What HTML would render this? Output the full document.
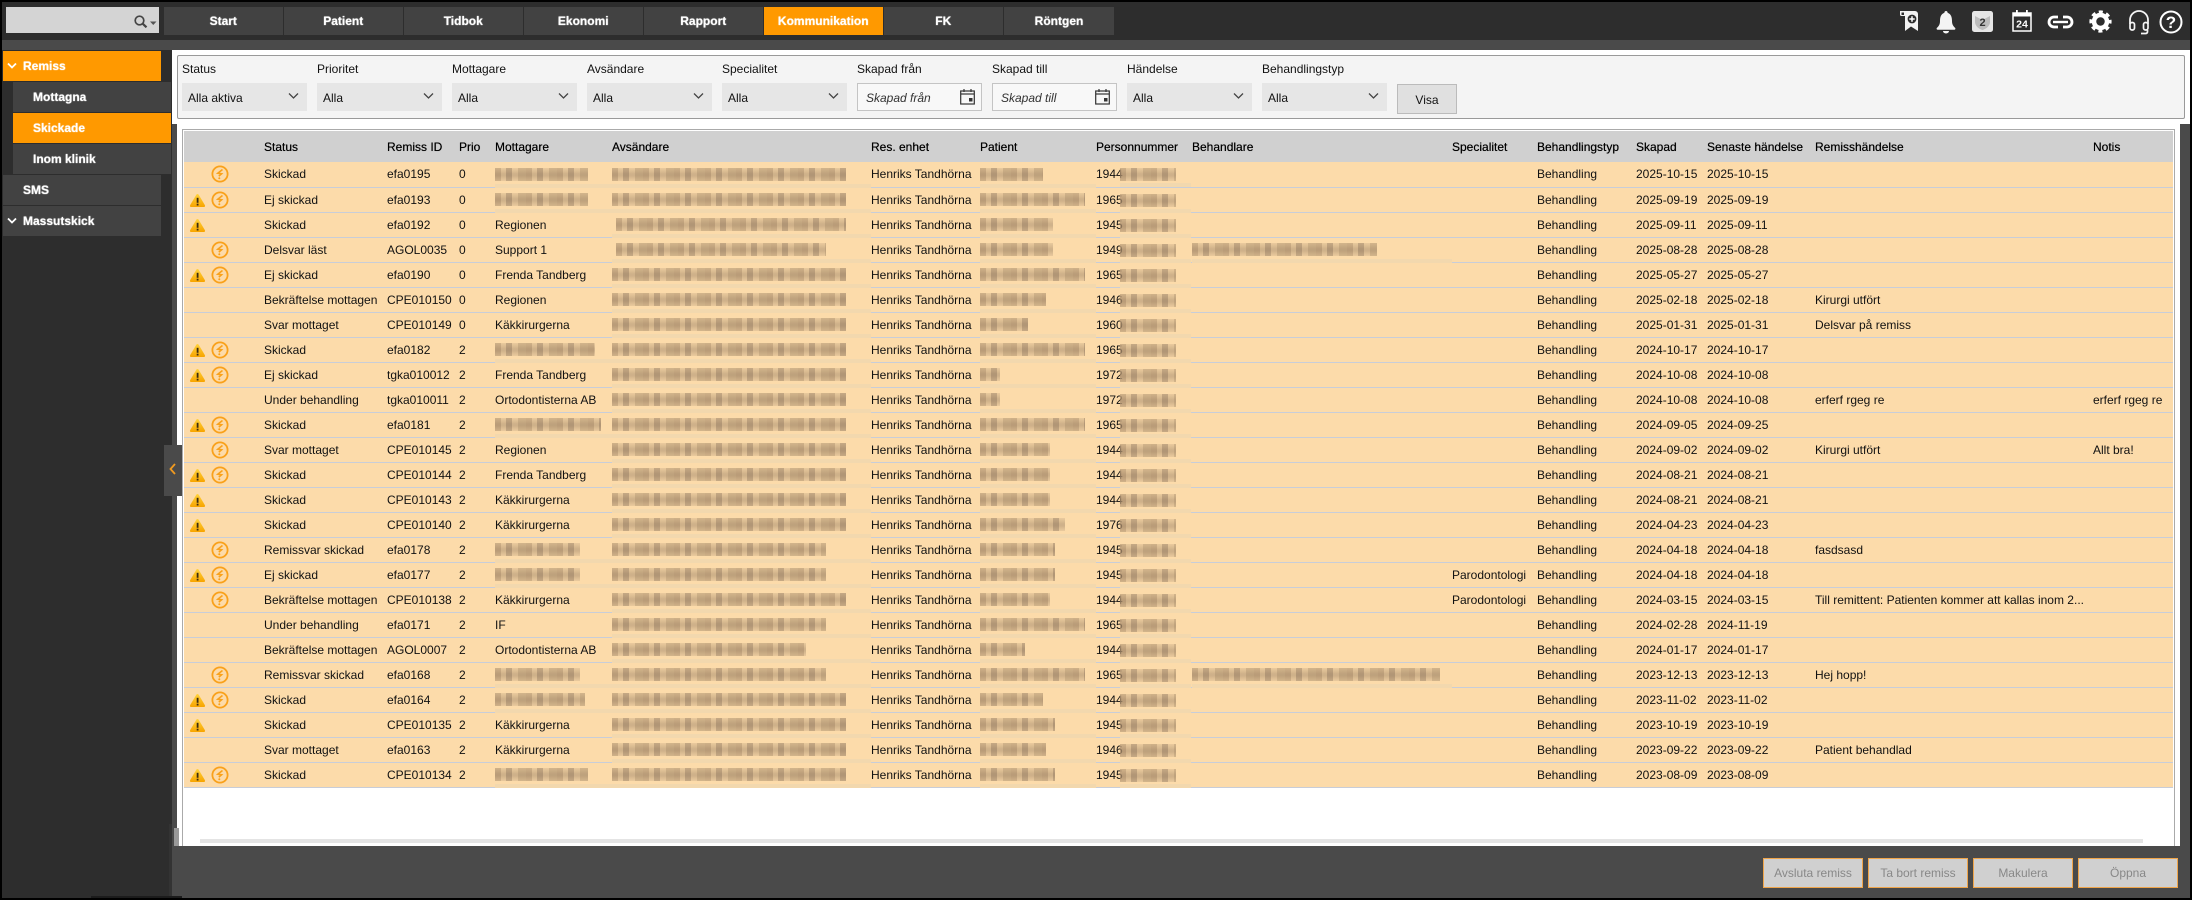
<!DOCTYPE html>
<html lang="sv"><head><meta charset="utf-8"><title>Remiss</title>
<style>
*{box-sizing:border-box}
html,body{margin:0;padding:0;width:2192px;height:900px;overflow:hidden;background:#000;font-family:"Liberation Sans",Arial,sans-serif;font-size:12px;color:#111}
.a{position:absolute}
.nav{position:absolute;top:7px;height:28px;width:118.5px;background:#424242;color:#fff;font-weight:bold;font-size:12px;text-align:center;line-height:28px;text-shadow:0 0 1px #fff}
.nav.on{background:#ff9900}
.sb{position:absolute;height:30px;background:#424242;color:#fff;font-weight:bold;font-size:12px;line-height:30px;text-shadow:0 0 1px #fff}
.sb.on{background:#ff9900}
.lbl{position:absolute;top:62px;line-height:14px;color:#111}
.dd{position:absolute;top:83px;height:28px;width:125px;background:#e6e6e6;line-height:30px;padding-left:6px}
.dd svg{position:absolute;right:8px;top:9px}
.dt{position:absolute;top:83px;height:28px;width:125px;background:#f8f8f8;border:1px solid #c4c4c4;line-height:28px;padding-left:8px;font-style:italic;color:#333}
.dt svg{position:absolute;right:6px;top:5px}
.btn{position:absolute;top:858px;width:100px;height:30px;background:#d0d0d0;border:1px solid #f0a54a;color:#888;text-align:center;line-height:28px}
table{position:absolute;left:184px;top:131px;width:1989px;border-collapse:collapse;table-layout:fixed}
th{height:31px;background:#d0d0d0;font-weight:normal;text-align:left;padding:0;color:#000;white-space:nowrap;text-shadow:0 0 .4px #000;overflow:visible}
td{height:25px;background:#fcdbaa;border-bottom:1px solid #c8cdd8;padding:0;white-space:nowrap;overflow:visible;position:relative;line-height:24px}
.w{position:absolute;left:5px;top:5px;width:17px;height:15px}
.e{position:absolute;left:27px;top:3px;width:18px;height:18px}
.b{display:inline-block;height:13px;vertical-align:middle;margin-top:-2px;background-color:rgba(205,175,135,.55);background-image:repeating-linear-gradient(90deg,rgba(150,122,92,.35) 0 6px,rgba(214,185,145,.25) 6px 11px,rgba(135,112,90,.4) 11px 17px,rgba(214,185,145,.2) 17px 23px,rgba(168,142,108,.4) 23px 31px),linear-gradient(180deg,rgba(252,219,170,.5) 0,rgba(140,115,90,.25) 45%,rgba(140,115,90,.25) 60%,rgba(252,219,170,.5) 100%)}
.b::after{content:"";position:absolute;left:0;right:0;bottom:-1px;height:4px;background:#f2d8ae}
.p{margin-left:-1px;position:absolute;left:25px;top:6px;margin-top:0}
.p::after{left:0;right:-15px;bottom:auto;top:15px}
</style></head><body>
<svg width="0" height="0" style="position:absolute"><defs>
<linearGradient id="g" x1="0" y1="0" x2="0" y2="1"><stop offset="0" stop-color="#ffd23c"/><stop offset="1" stop-color="#f7a400"/></linearGradient>
<symbol id="sw" viewBox="0 0 17 15"><path d="M8.500 1 C9.200 1 9.600 1.500 10 2.200 L15.800 12 C16.400 13.100 16 14 14.800 14 L2.200 14 C1 14 .6 13.100 1.200 12 L7 2.200 C7.400 1.500 7.800 1 8.500 1Z" fill="url(#g)"/><rect x="7.700" y="4.800" width="1.800" height="5" fill="#3a2a10"/><rect x="7.700" y="10.700" width="1.800" height="1.800" fill="#3a2a10"/></symbol>
<symbol id="se" viewBox="0 0 18 18"><circle cx="9" cy="9" r="7.600" fill="none" stroke="#f9a11b" stroke-width="1.800"/><path d="M11.500 4.500 L6.800 8.200 L10.600 8.800 L7.800 11.200" fill="none" stroke="#f9a11b" stroke-width="1.600"/><circle cx="8.300" cy="13.200" r="1" fill="#f9a11b"/></symbol>
</defs></svg>

<!-- top -->
<div class="a" style="left:2px;top:2px;width:2188px;height:38px;background:#2d2d2d"></div>
<div class="a" style="left:2px;top:40px;width:2188px;height:10px;background:#4a4a4a"></div>
<div class="a" style="left:6px;top:7px;width:153px;height:26px;background:#d4d4d4"></div>
<svg class="a" style="left:133px;top:14px" width="26" height="16"><circle cx="6.500" cy="6.500" r="4.300" fill="none" stroke="#444" stroke-width="1.700"/><path d="M9.700 9.700 L13.500 13.300" stroke="#444" stroke-width="2.200"/><path d="M17 7.500h6.500l-3.250 3.500z" fill="#555"/></svg>
<div class="nav" style="left:164px">Start</div>
<div class="nav" style="left:284px">Patient</div>
<div class="nav" style="left:404px">Tidbok</div>
<div class="nav" style="left:524px">Ekonomi</div>
<div class="nav" style="left:644px">Rapport</div>
<div class="nav on" style="left:764px">Kommunikation</div>
<div class="nav" style="left:884px">FK</div>
<div class="nav" style="left:1004px;width:110px">Röntgen</div>

<!-- top right icons -->
<svg class="a" style="left:1899px;top:11px" width="20" height="21"><path d="M1 0H16a3 3 0 0 1 3 3V20L12 15.500 6 20V5H2.500A1.500 1.500 0 0 1 1 3.500Z" fill="#f2f2f2"/><path d="M2.500 1.500H5V4H2.500Z" fill="#2d2d2d"/><circle cx="13" cy="8" r="5" fill="#2d2d2d" stroke="#f2f2f2" stroke-width="1.200"/><path d="M13 5.300V10.700M10.300 8H15.700" stroke="#fff" stroke-width="1.500"/></svg>
<svg class="a" style="left:1936px;top:11px" width="20" height="23"><path d="M10 0c1 0 1.600.7 1.600 1.700C15 3 16 6 16 10c0 3 1 5 3 6.800.8.800.4 2-.8 2H1.800C.6 18.800.2 17.600 1 16.800 3 15 4 13 4 10c0-4 1-7 4.400-8.300C8.400.7 9 0 10 0z" fill="#f4f4f4"/><path d="M7 20h6a3 2.500 0 0 1-6 0z" fill="#f4f4f4"/></svg>
<svg class="a" style="left:1972px;top:11px" width="21" height="21"><rect width="21" height="21" rx="2.500" fill="#e6e6e6"/><path d="M3 5 L10.500 9 L18 5 V11 C18 15 14 18 10.500 19 C7 18 3 15 3 11Z" fill="#bdbdbd"/><text x="10.500" y="15" font-family="Liberation Sans" font-size="11" font-weight="bold" fill="#333" text-anchor="middle">2</text></svg>
<svg class="a" style="left:2012px;top:9px" width="20" height="23"><rect x="1" y="4" width="18" height="18" fill="#2d2d2d" stroke="#fff" stroke-width="1.500"/><rect x="1" y="4" width="18" height="3.500" fill="#fff"/><rect x="4" y="1" width="1.800" height="4" fill="#fff"/><rect x="14" y="1" width="1.800" height="4" fill="#fff"/><text x="10" y="18.500" font-family="Liberation Sans" font-size="10.500" font-weight="bold" fill="#fff" text-anchor="middle">24</text></svg>
<svg class="a" style="left:2047px;top:14px" width="27" height="16"><path d="M11 3H7a5 5 0 0 0 0 10h4M16 3h4a5 5 0 0 1 0 10h-4" fill="none" stroke="#fff" stroke-width="2.800"/><path d="M6 8H21" stroke="#fff" stroke-width="2.400"/></svg>
<svg class="a" style="left:2089px;top:10px" width="23" height="23"><circle cx="11.500" cy="11.500" r="6.500" fill="none" stroke="#fff" stroke-width="4.500"/><circle cx="11.500" cy="11.500" r="9.500" fill="none" stroke="#fff" stroke-width="3.200" stroke-dasharray="4 3.460" stroke-dashoffset="2"/></svg>
<svg class="a" style="left:2128px;top:10px" width="22" height="25"><path d="M2 14V10a9 9 0 0 1 18 0v4" fill="none" stroke="#f4f4f4" stroke-width="1.800"/><rect x="2" y="12.500" width="4.500" height="7.500" rx="2" fill="none" stroke="#f4f4f4" stroke-width="1.700"/><rect x="15.500" y="12.500" width="4.500" height="7.500" rx="2" fill="none" stroke="#f4f4f4" stroke-width="1.700"/><path d="M19.500 20v2a2 2 0 0 1-2 1.500H13" fill="none" stroke="#f4f4f4" stroke-width="1.700"/></svg>
<svg class="a" style="left:2159px;top:10px" width="24" height="24"><circle cx="12" cy="12" r="10.500" fill="none" stroke="#fff" stroke-width="2"/><text x="12" y="18" font-family="Liberation Sans" font-size="17" font-weight="bold" fill="#fff" text-anchor="middle">?</text></svg>

<!-- sidebar -->
<div class="a" style="left:2px;top:50px;width:170px;height:848px;background:#2d2d2d"></div>
<div class="sb on" style="left:3px;top:51px;width:158px;padding-left:20px">Remiss</div>
<svg class="a" style="left:7px;top:62px" width="10" height="8"><path d="M1 1.500 L5 5.500 L9 1.500" fill="none" stroke="#fff" stroke-width="1.800"/></svg>
<div class="sb" style="left:13px;top:82px;width:158px;padding-left:20px">Mottagna</div>
<div class="sb on" style="left:13px;top:113px;width:158px;padding-left:20px">Skickade</div>
<div class="sb" style="left:13px;top:144px;width:158px;padding-left:20px">Inom klinik</div>
<div class="sb" style="left:3px;top:175px;width:158px;padding-left:20px">SMS</div>
<div class="sb" style="left:3px;top:206px;width:158px;padding-left:20px">Massutskick</div>
<svg class="a" style="left:7px;top:217px" width="10" height="8"><path d="M1 1.500 L5 5.500 L9 1.500" fill="none" stroke="#fff" stroke-width="1.800"/></svg>

<!-- main -->
<div class="a" style="left:172px;top:50px;width:2018px;height:74px;background:#fff"></div>
<div class="a" style="left:172px;top:124px;width:5px;height:774px;background:#4a4a4a"></div>
<div class="a" style="left:169px;top:824px;width:3px;height:74px;background:#333"></div>
<div class="a" style="left:177px;top:124px;width:2003px;height:722px;background:#fff"></div>
<div class="a" style="left:177px;top:846px;width:2013px;height:52px;background:#4a4a4a"></div>
<div class="a" style="left:2180px;top:124px;width:10px;height:722px;background:#4a4a4a"></div>
<div class="a" style="left:174px;top:828px;width:5px;height:18px;background:#999"></div>
<div class="a" style="left:91px;top:896px;width:91px;height:2px;background:#1c1c1c"></div>

<!-- filter -->
<div class="a" style="left:177px;top:55px;width:2008px;height:64px;background:#f4f4f4;border:1px solid #999;border-radius:2px"></div>
<div class="lbl" style="left:182px">Status</div>
<div class="lbl" style="left:317px">Prioritet</div>
<div class="lbl" style="left:452px">Mottagare</div>
<div class="lbl" style="left:587px">Avsändare</div>
<div class="lbl" style="left:722px">Specialitet</div>
<div class="lbl" style="left:857px">Skapad från</div>
<div class="lbl" style="left:992px">Skapad till</div>
<div class="lbl" style="left:1127px">Händelse</div>
<div class="lbl" style="left:1262px">Behandlingstyp</div>
<div class="dd" style="left:182px">Alla aktiva<svg width="11" height="8"><path d="M1 1.500 L5.500 6 L10 1.500" fill="none" stroke="#444" stroke-width="1.300"/></svg></div>
<div class="dd" style="left:317px">Alla<svg width="11" height="8"><path d="M1 1.500 L5.500 6 L10 1.500" fill="none" stroke="#444" stroke-width="1.300"/></svg></div>
<div class="dd" style="left:452px">Alla<svg width="11" height="8"><path d="M1 1.500 L5.500 6 L10 1.500" fill="none" stroke="#444" stroke-width="1.300"/></svg></div>
<div class="dd" style="left:587px">Alla<svg width="11" height="8"><path d="M1 1.500 L5.500 6 L10 1.500" fill="none" stroke="#444" stroke-width="1.300"/></svg></div>
<div class="dd" style="left:722px">Alla<svg width="11" height="8"><path d="M1 1.500 L5.500 6 L10 1.500" fill="none" stroke="#444" stroke-width="1.300"/></svg></div>
<div class="dt" style="left:857px">Skapad från<svg width="15" height="16"><rect x=".7" y="2" width="13.600" height="13" fill="none" stroke="#333" stroke-width="1.200"/><path d="M1 5H14" stroke="#333" stroke-width="1.200"/><path d="M4 0V3M11 0V3" stroke="#333" stroke-width="1.200"/><rect x="9" y="9" width="3.500" height="3.500" fill="#333"/></svg></div>
<div class="dt" style="left:992px">Skapad till<svg width="15" height="16"><rect x=".7" y="2" width="13.600" height="13" fill="none" stroke="#333" stroke-width="1.200"/><path d="M1 5H14" stroke="#333" stroke-width="1.200"/><path d="M4 0V3M11 0V3" stroke="#333" stroke-width="1.200"/><rect x="9" y="9" width="3.500" height="3.500" fill="#333"/></svg></div>
<div class="dd" style="left:1127px">Alla<svg width="11" height="8"><path d="M1 1.500 L5.500 6 L10 1.500" fill="none" stroke="#444" stroke-width="1.300"/></svg></div>
<div class="dd" style="left:1262px">Alla<svg width="11" height="8"><path d="M1 1.500 L5.500 6 L10 1.500" fill="none" stroke="#444" stroke-width="1.300"/></svg></div>
<div class="a" style="left:1397px;top:84px;width:60px;height:30px;background:#e0e0e0;border:1px solid #bbb;text-align:center;line-height:30px">Visa</div>

<!-- table frame -->
<div class="a" style="left:182px;top:129px;width:1993px;height:717px;border:1px solid #aaa;border-bottom:0"></div>
<div class="a" style="left:200px;top:839px;width:1943px;height:4px;background:#e4e4e4"></div>

<table>
<colgroup><col style="width:80px"><col style="width:123px"><col style="width:72px"><col style="width:36px"><col style="width:117px"><col style="width:259px"><col style="width:109px"><col style="width:116px"><col style="width:96px"><col style="width:260px"><col style="width:85px"><col style="width:99px"><col style="width:71px"><col style="width:108px"><col style="width:278px"><col style="width:80px"></colgroup>
<tr><th></th><th>Status</th><th>Remiss ID</th><th>Prio</th><th>Mottagare</th><th>Avsändare</th><th>Res. enhet</th><th>Patient</th><th>Personnummer</th><th>Behandlare</th><th>Specialitet</th><th>Behandlingstyp</th><th>Skapad</th><th>Senaste händelse</th><th>Remisshändelse</th><th>Notis</th></tr>
<tr><td><svg class="e"><use href="#se"/></svg></td><td>Skickad</td><td>efa0195</td><td>0</td><td><span class="b" style="width:93px"></span></td><td><span class="b" style="width:234px"></span></td><td>Henriks Tandhörna</td><td><span class="b" style="width:63px"></span></td><td>1944<span class="b p" style="width:56px"></span></td><td></td><td></td><td>Behandling</td><td>2025-10-15</td><td>2025-10-15</td><td></td><td></td></tr>
<tr><td><svg class="w"><use href="#sw"/></svg><svg class="e"><use href="#se"/></svg></td><td>Ej skickad</td><td>efa0193</td><td>0</td><td><span class="b" style="width:93px"></span></td><td><span class="b" style="width:234px"></span></td><td>Henriks Tandhörna</td><td><span class="b" style="width:105px"></span></td><td>1965<span class="b p" style="width:56px"></span></td><td></td><td></td><td>Behandling</td><td>2025-09-19</td><td>2025-09-19</td><td></td><td></td></tr>
<tr><td><svg class="w"><use href="#sw"/></svg></td><td>Skickad</td><td>efa0192</td><td>0</td><td>Regionen</td><td><span class="b" style="width:230px;margin-left:4px"></span></td><td>Henriks Tandhörna</td><td><span class="b" style="width:73px"></span></td><td>1945<span class="b p" style="width:56px"></span></td><td></td><td></td><td>Behandling</td><td>2025-09-11</td><td>2025-09-11</td><td></td><td></td></tr>
<tr><td><svg class="e"><use href="#se"/></svg></td><td>Delsvar läst</td><td>AGOL0035</td><td>0</td><td>Support 1</td><td><span class="b" style="width:210px;margin-left:4px"></span></td><td>Henriks Tandhörna</td><td><span class="b" style="width:73px"></span></td><td>1949<span class="b p" style="width:56px"></span></td><td><span class="b" style="width:185px"></span></td><td></td><td>Behandling</td><td>2025-08-28</td><td>2025-08-28</td><td></td><td></td></tr>
<tr><td><svg class="w"><use href="#sw"/></svg><svg class="e"><use href="#se"/></svg></td><td>Ej skickad</td><td>efa0190</td><td>0</td><td>Frenda Tandberg</td><td><span class="b" style="width:234px"></span></td><td>Henriks Tandhörna</td><td><span class="b" style="width:105px"></span></td><td>1965<span class="b p" style="width:56px"></span></td><td></td><td></td><td>Behandling</td><td>2025-05-27</td><td>2025-05-27</td><td></td><td></td></tr>
<tr><td></td><td>Bekräftelse mottagen</td><td>CPE010150</td><td>0</td><td>Regionen</td><td><span class="b" style="width:234px"></span></td><td>Henriks Tandhörna</td><td><span class="b" style="width:66px"></span></td><td>1946<span class="b p" style="width:56px"></span></td><td></td><td></td><td>Behandling</td><td>2025-02-18</td><td>2025-02-18</td><td>Kirurgi utfört</td><td></td></tr>
<tr><td></td><td>Svar mottaget</td><td>CPE010149</td><td>0</td><td>Käkkirurgerna</td><td><span class="b" style="width:234px"></span></td><td>Henriks Tandhörna</td><td><span class="b" style="width:48px"></span></td><td>1960<span class="b p" style="width:56px"></span></td><td></td><td></td><td>Behandling</td><td>2025-01-31</td><td>2025-01-31</td><td>Delsvar på remiss</td><td></td></tr>
<tr><td><svg class="w"><use href="#sw"/></svg><svg class="e"><use href="#se"/></svg></td><td>Skickad</td><td>efa0182</td><td>2</td><td><span class="b" style="width:100px"></span></td><td><span class="b" style="width:234px"></span></td><td>Henriks Tandhörna</td><td><span class="b" style="width:105px"></span></td><td>1965<span class="b p" style="width:56px"></span></td><td></td><td></td><td>Behandling</td><td>2024-10-17</td><td>2024-10-17</td><td></td><td></td></tr>
<tr><td><svg class="w"><use href="#sw"/></svg><svg class="e"><use href="#se"/></svg></td><td>Ej skickad</td><td>tgka010012</td><td>2</td><td>Frenda Tandberg</td><td><span class="b" style="width:234px"></span></td><td>Henriks Tandhörna</td><td><span class="b" style="width:20px"></span></td><td>1972<span class="b p" style="width:56px"></span></td><td></td><td></td><td>Behandling</td><td>2024-10-08</td><td>2024-10-08</td><td></td><td></td></tr>
<tr><td></td><td>Under behandling</td><td>tgka010011</td><td>2</td><td>Ortodontisterna AB</td><td><span class="b" style="width:234px"></span></td><td>Henriks Tandhörna</td><td><span class="b" style="width:20px"></span></td><td>1972<span class="b p" style="width:56px"></span></td><td></td><td></td><td>Behandling</td><td>2024-10-08</td><td>2024-10-08</td><td>erferf rgeg re</td><td>erferf rgeg re</td></tr>
<tr><td><svg class="w"><use href="#sw"/></svg><svg class="e"><use href="#se"/></svg></td><td>Skickad</td><td>efa0181</td><td>2</td><td><span class="b" style="width:106px"></span></td><td><span class="b" style="width:234px"></span></td><td>Henriks Tandhörna</td><td><span class="b" style="width:105px"></span></td><td>1965<span class="b p" style="width:56px"></span></td><td></td><td></td><td>Behandling</td><td>2024-09-05</td><td>2024-09-25</td><td></td><td></td></tr>
<tr><td><svg class="e"><use href="#se"/></svg></td><td>Svar mottaget</td><td>CPE010145</td><td>2</td><td>Regionen</td><td><span class="b" style="width:234px"></span></td><td>Henriks Tandhörna</td><td><span class="b" style="width:70px"></span></td><td>1944<span class="b p" style="width:56px"></span></td><td></td><td></td><td>Behandling</td><td>2024-09-02</td><td>2024-09-02</td><td>Kirurgi utfört</td><td>Allt bra!</td></tr>
<tr><td><svg class="w"><use href="#sw"/></svg><svg class="e"><use href="#se"/></svg></td><td>Skickad</td><td>CPE010144</td><td>2</td><td>Frenda Tandberg</td><td><span class="b" style="width:234px"></span></td><td>Henriks Tandhörna</td><td><span class="b" style="width:70px"></span></td><td>1944<span class="b p" style="width:56px"></span></td><td></td><td></td><td>Behandling</td><td>2024-08-21</td><td>2024-08-21</td><td></td><td></td></tr>
<tr><td><svg class="w"><use href="#sw"/></svg></td><td>Skickad</td><td>CPE010143</td><td>2</td><td>Käkkirurgerna</td><td><span class="b" style="width:234px"></span></td><td>Henriks Tandhörna</td><td><span class="b" style="width:70px"></span></td><td>1944<span class="b p" style="width:56px"></span></td><td></td><td></td><td>Behandling</td><td>2024-08-21</td><td>2024-08-21</td><td></td><td></td></tr>
<tr><td><svg class="w"><use href="#sw"/></svg></td><td>Skickad</td><td>CPE010140</td><td>2</td><td>Käkkirurgerna</td><td><span class="b" style="width:234px"></span></td><td>Henriks Tandhörna</td><td><span class="b" style="width:85px"></span></td><td>1976<span class="b p" style="width:56px"></span></td><td></td><td></td><td>Behandling</td><td>2024-04-23</td><td>2024-04-23</td><td></td><td></td></tr>
<tr><td><svg class="e"><use href="#se"/></svg></td><td>Remissvar skickad</td><td>efa0178</td><td>2</td><td><span class="b" style="width:85px"></span></td><td><span class="b" style="width:214px"></span></td><td>Henriks Tandhörna</td><td><span class="b" style="width:75px"></span></td><td>1945<span class="b p" style="width:56px"></span></td><td></td><td></td><td>Behandling</td><td>2024-04-18</td><td>2024-04-18</td><td>fasdsasd</td><td></td></tr>
<tr><td><svg class="w"><use href="#sw"/></svg><svg class="e"><use href="#se"/></svg></td><td>Ej skickad</td><td>efa0177</td><td>2</td><td><span class="b" style="width:85px"></span></td><td><span class="b" style="width:214px"></span></td><td>Henriks Tandhörna</td><td><span class="b" style="width:75px"></span></td><td>1945<span class="b p" style="width:56px"></span></td><td></td><td>Parodontologi</td><td>Behandling</td><td>2024-04-18</td><td>2024-04-18</td><td></td><td></td></tr>
<tr><td><svg class="e"><use href="#se"/></svg></td><td>Bekräftelse mottagen</td><td>CPE010138</td><td>2</td><td>Käkkirurgerna</td><td><span class="b" style="width:234px"></span></td><td>Henriks Tandhörna</td><td><span class="b" style="width:70px"></span></td><td>1944<span class="b p" style="width:56px"></span></td><td></td><td>Parodontologi</td><td>Behandling</td><td>2024-03-15</td><td>2024-03-15</td><td>Till remittent: Patienten kommer att kallas inom 2...</td><td></td></tr>
<tr><td></td><td>Under behandling</td><td>efa0171</td><td>2</td><td>IF</td><td><span class="b" style="width:214px"></span></td><td>Henriks Tandhörna</td><td><span class="b" style="width:105px"></span></td><td>1965<span class="b p" style="width:56px"></span></td><td></td><td></td><td>Behandling</td><td>2024-02-28</td><td>2024-11-19</td><td></td><td></td></tr>
<tr><td></td><td>Bekräftelse mottagen</td><td>AGOL0007</td><td>2</td><td>Ortodontisterna AB</td><td><span class="b" style="width:194px"></span></td><td>Henriks Tandhörna</td><td><span class="b" style="width:45px"></span></td><td>1944<span class="b p" style="width:56px"></span></td><td></td><td></td><td>Behandling</td><td>2024-01-17</td><td>2024-01-17</td><td></td><td></td></tr>
<tr><td><svg class="e"><use href="#se"/></svg></td><td>Remissvar skickad</td><td>efa0168</td><td>2</td><td><span class="b" style="width:85px"></span></td><td><span class="b" style="width:214px"></span></td><td>Henriks Tandhörna</td><td><span class="b" style="width:105px"></span></td><td>1965<span class="b p" style="width:56px"></span></td><td><span class="b" style="width:248px"></span></td><td></td><td>Behandling</td><td>2023-12-13</td><td>2023-12-13</td><td>Hej hopp!</td><td></td></tr>
<tr><td><svg class="w"><use href="#sw"/></svg><svg class="e"><use href="#se"/></svg></td><td>Skickad</td><td>efa0164</td><td>2</td><td><span class="b" style="width:90px"></span></td><td><span class="b" style="width:234px"></span></td><td>Henriks Tandhörna</td><td><span class="b" style="width:63px"></span></td><td>1944<span class="b p" style="width:56px"></span></td><td></td><td></td><td>Behandling</td><td>2023-11-02</td><td>2023-11-02</td><td></td><td></td></tr>
<tr><td><svg class="w"><use href="#sw"/></svg></td><td>Skickad</td><td>CPE010135</td><td>2</td><td>Käkkirurgerna</td><td><span class="b" style="width:234px"></span></td><td>Henriks Tandhörna</td><td><span class="b" style="width:75px"></span></td><td>1945<span class="b p" style="width:56px"></span></td><td></td><td></td><td>Behandling</td><td>2023-10-19</td><td>2023-10-19</td><td></td><td></td></tr>
<tr><td></td><td>Svar mottaget</td><td>efa0163</td><td>2</td><td>Käkkirurgerna</td><td><span class="b" style="width:234px"></span></td><td>Henriks Tandhörna</td><td><span class="b" style="width:66px"></span></td><td>1946<span class="b p" style="width:56px"></span></td><td></td><td></td><td>Behandling</td><td>2023-09-22</td><td>2023-09-22</td><td>Patient behandlad</td><td></td></tr>
<tr><td><svg class="w"><use href="#sw"/></svg><svg class="e"><use href="#se"/></svg></td><td>Skickad</td><td>CPE010134</td><td>2</td><td><span class="b" style="width:93px"></span></td><td><span class="b" style="width:234px"></span></td><td>Henriks Tandhörna</td><td><span class="b" style="width:75px"></span></td><td>1945<span class="b p" style="width:56px"></span></td><td></td><td></td><td>Behandling</td><td>2023-08-09</td><td>2023-08-09</td><td></td><td></td></tr>
</table>

<!-- collapse handle -->
<div class="a" style="left:164px;top:445px;width:18px;height:51px;background:#4a4a4a"></div>
<svg class="a" style="left:169px;top:463px" width="8" height="12"><path d="M6 1 L1.500 6 L6 11" fill="none" stroke="#f09a20" stroke-width="1.800"/></svg>

<!-- bottom buttons -->
<div class="btn" style="left:1763px">Avsluta remiss</div>
<div class="btn" style="left:1868px">Ta bort remiss</div>
<div class="btn" style="left:1973px">Makulera</div>
<div class="btn" style="left:2078px">Öppna</div>
</body></html>
